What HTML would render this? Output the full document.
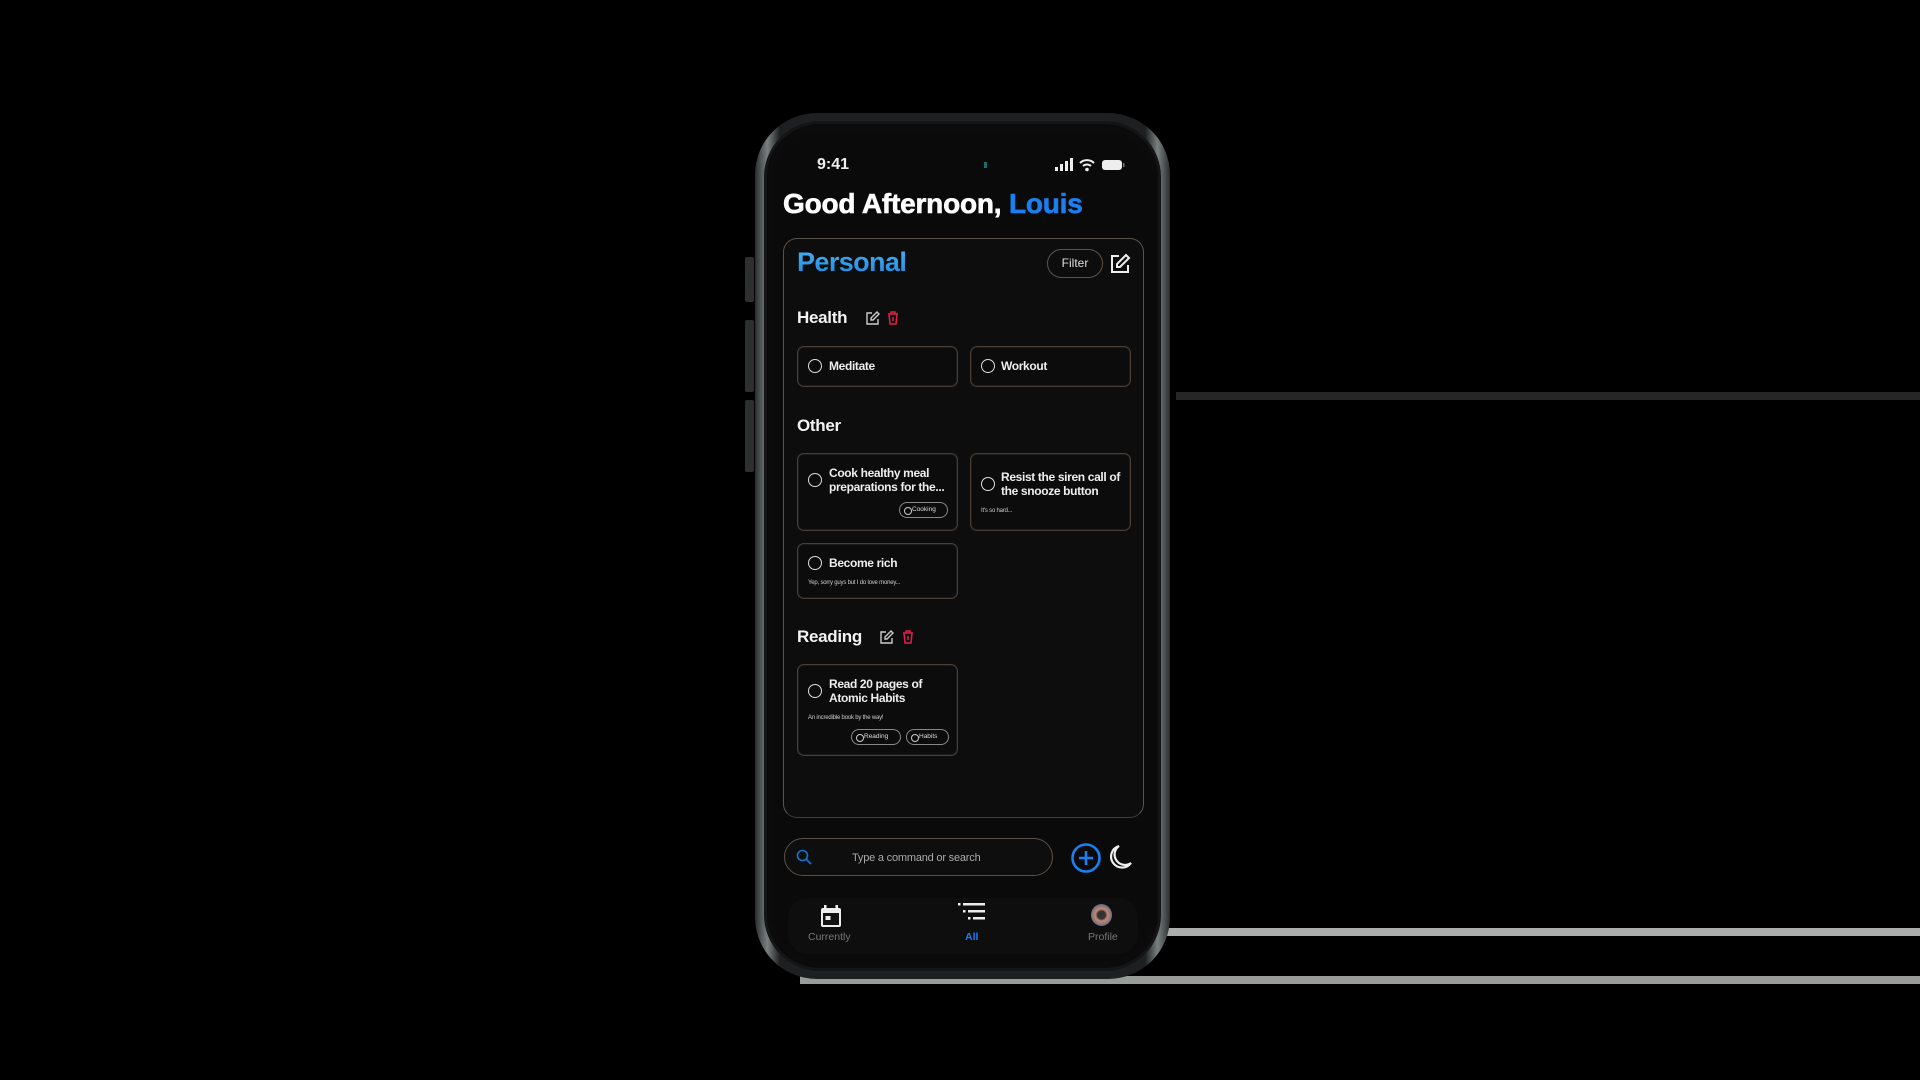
<!DOCTYPE html>
<html><head><meta charset="utf-8"><style>
*{margin:0;padding:0;box-sizing:border-box}
body{width:1920px;height:1080px;background:#000;position:relative;overflow:hidden;font-family:"Liberation Sans",sans-serif;color:#fff}
.a{position:absolute}
.card{position:absolute;border:1.5px solid #4a3f36;border-radius:7px;background:#0c0c0c;box-shadow:inset 0 0 0 1px #1a1a1a}
.rad{position:absolute;width:14px;height:14px;border:1.6px solid #ddd;border-radius:50%}
.t{position:absolute;font-weight:bold;font-size:12px;line-height:14px;color:#eee;letter-spacing:-0.35px}
.s{position:absolute;font-size:6px;color:#ccc;letter-spacing:-0.2px}
.tag{position:absolute;height:16px;border:1.3px solid #888;border-radius:8px;font-size:6.5px;color:#ddd;line-height:13px;padding-left:12px}
.tag:before{content:"";position:absolute;left:4px;top:3.5px;width:6px;height:6px;border:1px solid #ccc;border-radius:50%}
.h{position:absolute;font-weight:bold;font-size:17px;color:#f2f2f2;letter-spacing:-0.3px}
</style></head><body>
<div class="a" style="left:1176px;top:392px;width:744px;height:8px;background:#262626"></div>
<div class="a" style="left:1167px;top:928px;width:753px;height:8px;background:#a9aeac"></div>
<div class="a" style="left:800px;top:976px;width:1120px;height:8px;background:#999b98"></div>
<div class="a" style="left:745px;top:257px;width:9px;height:45px;background:#2e3030;border-radius:2px"></div>
<div class="a" style="left:745px;top:320px;width:9px;height:72px;background:#2e3030;border-radius:2px"></div>
<div class="a" style="left:745px;top:400px;width:9px;height:72px;background:#2e3030;border-radius:2px"></div>
<div class="a" style="left:755px;top:113px;width:415px;height:866px;border-radius:62px;background:linear-gradient(90deg,#2a2d2e,#7a8080 3%,#1d1f20 6%,#1d1f20 94%,#7a8080 97%,#2a2d2e);"></div>
<div class="a" style="left:764px;top:121px;width:397px;height:850px;border-radius:56px;background:#0b0b0b;border:3px solid #141516"></div>
<div class="a" style="left:773px;top:130px;width:380px;height:832px;border-radius:50px;background:#0a0a0a"></div>
<div class="a" style="left:817px;top:156px;font-size:16px;font-weight:bold;color:#eee">9:41</div>
<div class="a" style="left:984px;top:162px;width:3px;height:6px;background:#1f6b6b"></div>
<svg class="a" style="left:1054px;top:157px" width="72" height="16" viewBox="0 0 72 16">
<rect x="1" y="10" width="3" height="4" fill="#eee"/><rect x="6" y="7" width="3" height="7" fill="#eee"/><rect x="11" y="4" width="3" height="10" fill="#eee"/><rect x="16" y="1" width="3" height="13" fill="#eee"/>
<path d="M26 6a10 10 0 0 1 14 0M29 9a6 6 0 0 1 8 0" stroke="#eee" stroke-width="2" fill="none"/><circle cx="33" cy="12.5" r="1.8" fill="#eee"/>
<rect x="48" y="3" width="20" height="10" rx="3" fill="#eee"/><rect x="69" y="6" width="1.5" height="4" fill="#777"/>
</svg>
<div class="a" style="left:783px;top:188px;font-size:28px;font-weight:bold;letter-spacing:-0.2px;-webkit-text-stroke:0.6px #fff">Good Afternoon, <span style="color:#1a7ff0;-webkit-text-stroke:0.6px #1a7ff0">Louis</span></div>
<div class="a" style="left:783px;top:238px;width:361px;height:580px;border:1.5px solid #5a544e;border-radius:14px;background:#0d0d0d;border-bottom-color:#4a3a2a"></div>
<div class="a" style="left:797px;top:247px;font-size:27px;font-weight:bold;letter-spacing:-0.6px;background:linear-gradient(180deg,#46b4f5,#1f86e0);-webkit-background-clip:text;color:transparent">Personal</div>
<div class="a" style="left:1047px;top:249px;width:56px;height:29px;border:1.5px solid #5e5248;border-radius:15px;font-size:12px;text-align:center;line-height:26px;color:#ddd">Filter</div>
<svg class="a" style="left:1109px;top:253px" width="22" height="22" viewBox="0 0 22 22" fill="none" stroke="#eee" stroke-width="2"><path d="M10 3H3v16h16v-7"/><path d="M17 2l3 3-9 9H8v-3z"/></svg>
<div class="h" style="left:797px;top:308px">Health</div>
<svg class="a" style="left:866px;top:311px" width="14" height="14" viewBox="0 0 14 14" fill="none" stroke="#ccc" stroke-width="1.4"><path d="M6 2H1v11h11V8"/><path d="M11 1l2 2-6 6H5V7z"/></svg>
<svg class="a" style="left:887px;top:311px" width="12" height="14" viewBox="0 0 12 14" fill="none" stroke="#e0204a" stroke-width="1.5"><path d="M1 3h10M4 3V1h4v2M2 3l1 10h6l1-10M6 6v4"/></svg>
<div class="card" style="left:797px;top:346px;width:161px;height:41px"></div>
<div class="rad" style="left:808px;top:359px"></div><div class="t" style="left:829px;top:359px">Meditate</div>
<div class="card" style="left:970px;top:346px;width:161px;height:41px"></div>
<div class="rad" style="left:981px;top:359px"></div><div class="t" style="left:1001px;top:359px">Workout</div>
<div class="h" style="left:797px;top:416px">Other</div>
<div class="card" style="left:797px;top:453px;width:161px;height:78px"></div>
<div class="rad" style="left:808px;top:473px"></div><div class="t" style="left:829px;top:466px">Cook healthy meal<br>preparations for the...</div>
<div class="tag" style="left:899px;top:502px;width:49px">Cooking</div>
<div class="card" style="left:970px;top:453px;width:161px;height:78px"></div>
<div class="rad" style="left:981px;top:477px"></div><div class="t" style="left:1001px;top:470px">Resist the siren call of<br>the snooze button</div>
<div class="s" style="left:981px;top:508px">It's so hard...</div>
<div class="card" style="left:797px;top:543px;width:161px;height:56px"></div>
<div class="rad" style="left:808px;top:556px"></div><div class="t" style="left:829px;top:556px">Become rich</div>
<div class="s" style="left:808px;top:580px">Yep, sorry guys but I do love money...</div>
<div class="h" style="left:797px;top:627px">Reading</div>
<svg class="a" style="left:880px;top:630px" width="14" height="14" viewBox="0 0 14 14" fill="none" stroke="#ccc" stroke-width="1.4"><path d="M6 2H1v11h11V8"/><path d="M11 1l2 2-6 6H5V7z"/></svg>
<svg class="a" style="left:902px;top:630px" width="12" height="14" viewBox="0 0 12 14" fill="none" stroke="#e0204a" stroke-width="1.5"><path d="M1 3h10M4 3V1h4v2M2 3l1 10h6l1-10M6 6v4"/></svg>
<div class="card" style="left:797px;top:664px;width:161px;height:92px"></div>
<div class="rad" style="left:808px;top:684px"></div><div class="t" style="left:829px;top:677px">Read 20 pages of<br>Atomic Habits</div>
<div class="s" style="left:808px;top:715px">An incredible book by the way!</div>
<div class="tag" style="left:851px;top:729px;width:50px">Reading</div>
<div class="tag" style="left:906px;top:729px;width:43px">Habits</div>
<div class="a" style="left:784px;top:838px;width:269px;height:38px;border:1.5px solid #5a5048;border-radius:19px;background:#0e0e0e"></div>
<svg class="a" style="left:796px;top:849px" width="16" height="16" viewBox="0 0 16 16" fill="none" stroke="#1a70d0" stroke-width="1.6"><circle cx="6.5" cy="6.5" r="5"/><path d="M10 10l5 5"/></svg>
<div class="a" style="left:852px;top:852px;font-size:11px;color:#aaa;letter-spacing:-0.2px">Type a command or search</div>
<svg class="a" style="left:1070px;top:842px" width="32" height="32" viewBox="0 0 32 32" fill="none" stroke="#1a7ff0" stroke-width="2.6"><circle cx="16" cy="16" r="13.5"/><path d="M16 9v14M9 16h14"/></svg>
<svg class="a" style="left:1107px;top:844px" width="26" height="28" viewBox="0 0 26 28" fill="none" stroke="#eee" stroke-width="2.2"><path d="M12 2A11 11 0 1 0 24 19 9 9 0 0 1 12 2z"/></svg>
<div class="a" style="left:788px;top:898px;width:350px;height:56px;border-radius:20px;background:#0e0e0e"></div>
<svg class="a" style="left:820px;top:904px" width="22" height="24" viewBox="0 0 22 24"><rect x="1" y="4" width="20" height="19" rx="2" fill="#eee"/><rect x="4" y="1" width="2.5" height="5" fill="#eee"/><rect x="15.5" y="1" width="2.5" height="5" fill="#eee"/><rect x="3" y="9" width="16" height="12" fill="#111"/><rect x="5.5" y="12" width="5" height="4" fill="#eee"/></svg>
<div class="a" style="left:808px;top:931px;font-size:10.5px;color:#777">Currently</div>
<svg class="a" style="left:958px;top:903px" width="28" height="18" viewBox="0 0 28 18" fill="#eee"><rect x="0" y="0" width="2.5" height="2.5"/><rect x="5" y="0" width="22" height="2.5"/><rect x="5" y="7" width="2.5" height="2.5"/><rect x="10" y="7" width="17" height="2.5"/><rect x="10" y="14" width="2.5" height="2.5"/><rect x="15" y="14" width="12" height="2.5"/></svg>
<div class="a" style="left:965px;top:931px;font-size:10.5px;font-weight:bold;color:#1a7ff0">All</div>
<div class="a" style="left:1091px;top:904px;width:21px;height:22px;border-radius:50%;background:radial-gradient(circle at 50% 50%,#333 0 25%,#c88870 40%,#5a6b88 75%)"></div>
<div class="a" style="left:1088px;top:931px;font-size:10.5px;color:#777">Profile</div>
</body></html>
